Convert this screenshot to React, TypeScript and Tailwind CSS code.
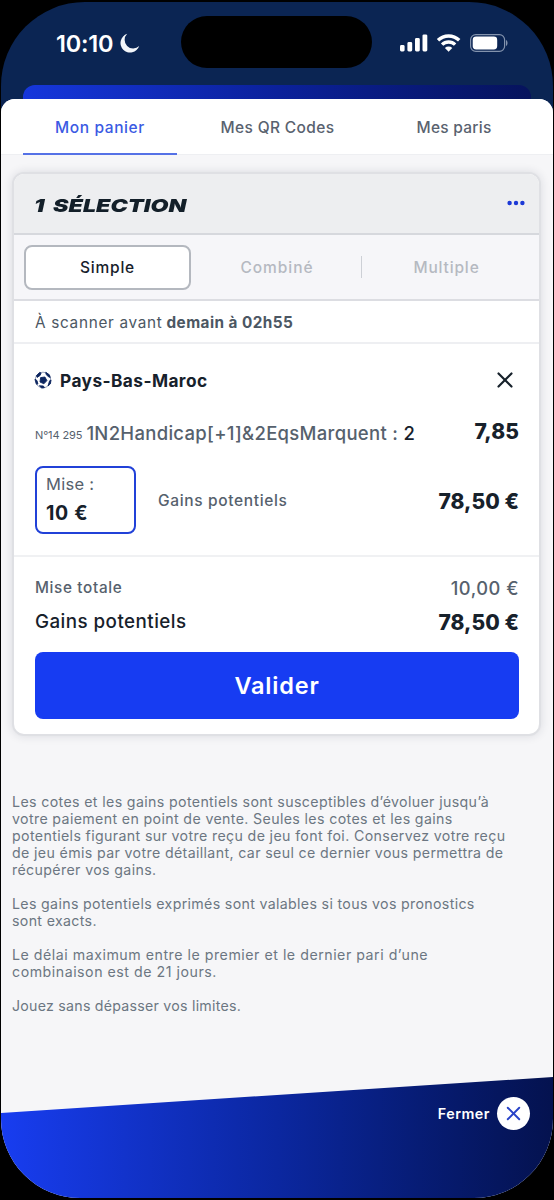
import { X } from 'lucide-react'
import type { ReactNode } from 'react'

const legal = [
  {
    tracking: 'tracking-[0.36px]',
    lines: [
      'Les cotes et les gains potentiels sont susceptibles d’évoluer jusqu’à',
      'votre paiement en point de vente. Seules les cotes et les gains',
      'potentiels figurant sur votre reçu de jeu font foi. Conservez votre reçu',
      'de jeu émis par votre détaillant, car seul ce dernier vous permettra de',
      'récupérer vos gains.',
    ],
  },
  {
    tracking: 'tracking-[0.33px]',
    lines: [
      'Les gains potentiels exprimés sont valables si tous vos pronostics',
      'sont exacts.',
    ],
  },
  {
    tracking: 'tracking-[0.52px]',
    lines: [
      'Le délai maximum entre le premier et le dernier pari d’une',
      'combinaison est de 21 jours.',
    ],
  },
  {
    tracking: 'tracking-[0.24px]',
    lines: ['Jouez sans dépasser vos limites.'],
  },
]

function StatusBar(): ReactNode {
  return (
    <div className="flex h-[83px] shrink-0 items-start pt-[14px]">
      <div className="flex h-[54px] w-[180px] items-center pl-[55px] text-white">
        <span className="w-[64px] pt-px text-[23.5px] font-semibold tracking-[-0.2px]">
          10:10
        </span>
        <svg className="blur-[0.6px]" width="20" height="20" viewBox="0 0 20 20">
          <path d="M7.2 .8A9.6 9.6 0 1 0 19.2 13 8.2 8.2 0 0 1 7.2 .8Z" fill="#f3f6fa" />
        </svg>
      </div>
      <div className="h-[52px] w-[191px] rounded-full bg-black" />
      <div className="flex h-[54px] items-center pl-[28px]">
        <svg width="108" height="18" viewBox="0 0 108 18" fill="#fff">
          <rect x="0" y="11" width="4.6" height="6.5" rx="1.4" />
          <rect x="7.4" y="8" width="4.8" height="9.5" rx="1.4" />
          <rect x="15" y="4" width="4.8" height="13.5" rx="1.4" />
          <rect x="22.5" y="0.4" width="4.8" height="17.1" rx="1.4" />
          <g fill="none" stroke="#fff" strokeWidth="3.4">
            <path d="M38 6.3a15.2 15.2 0 0 1 21.2 0" />
            <path d="M42.1 10.6a9.3 9.3 0 0 1 13 0" />
          </g>
          <path d="M44.9 13.9a5.4 5.4 0 0 1 7.4 0L48.6 17.7Z" />
          <rect
            x="70.6"
            y="0.6"
            width="34"
            height="16.8"
            rx="5.2"
            fill="none"
            stroke="#8393ad"
            strokeWidth="1.2"
          />
          <rect x="72.7" y="2.6" width="24.5" height="12.8" rx="3.4" />
          <path d="M106 6v6c2-1 2-5 0-6Z" fill="#8393ad" />
        </svg>
      </div>
    </div>
  )
}

function Ball(): ReactNode {
  return (
    <svg width="18" height="18" viewBox="0 0 18 18">
      <circle cx="9" cy="9" r="7.8" fill="#fff" stroke="#7d8aa8" strokeWidth=".8" />
      <g fill="#0d2660" stroke="#0d2660" strokeWidth="0.9">
        <path d="M6.6 6.6l4.3-.6 2 3.6-3 3.2-3.9-1.8Z" />
        <path d="M2.4 4.6l3.3-3.2 1.4.6-1 2.4-2.9 2Z" />
        <path d="M11.8 1.3l3.6 2.5.8 2.7-2.4-1.2-1.8-2.2Z" />
        <path d="M1 8.2l2 1.4.9 3.4-1.4.2Z" />
        <path d="M15.6 9.8l1.4-.8-.6 3.8-2.4 2.2Z" />
        <path d="M5.4 14.8l4 .2 1 1.7-2.7.3Z" />
      </g>
    </svg>
  )
}

function Tabs(): ReactNode {
  return (
    <div className="flex h-[56px] w-full border-b border-[#eeeff2] pl-[22px] text-[15.5px] font-medium text-[#59626f]">
      <button className="h-[56px] w-[154px] border-b-2 border-[#5571e6] pt-[3px] text-[#3a5ae3]">
        <span className="tracking-[0.6px]">Mon panier</span>
      </button>
      <button className="w-[201px] pt-[2px] tracking-[0.35px]">Mes QR Codes</button>
      <button className="w-[152px] pt-[2px] tracking-[0.25px]">Mes paris</button>
    </div>
  )
}

function Card(): ReactNode {
  return (
    <section className="ml-[11px] mt-[17px] h-[564px] w-[529px] overflow-hidden rounded-[12px] border-2 border-[#dfe0e4] bg-white shadow-[0_0_10px_rgba(30,40,60,0.13)]">
      <header className="flex h-[61px] items-center justify-between border-b-2 border-[#d6d8dd] bg-[#edeef0] pl-[20px] pr-[14px]">
        <h1 className="origin-left scale-x-[1.29] pt-[4px] text-[18px] font-black italic text-[#131f29] [word-spacing:3px]">
          1 SÉLECTION
        </h1>
        <svg
          className="mb-[2px]"
          width="18"
          height="6"
          viewBox="0 0 18 6"
          fill="#1c39d6"
        >
          <circle cx="2.6" cy="3" r="2.2" />
          <circle cx="9" cy="3" r="2.2" />
          <circle cx="15.4" cy="3" r="2.2" />
        </svg>
      </header>

      <div className="flex h-[66px] items-center border-b-2 border-[#dcdde2] bg-[#f6f6f9] pl-[10px] text-[15.5px] font-medium text-[#b5b9c1]">
        <button className="h-[45px] w-[167px] rounded-[8px] border-2 border-[#b4b8bf] bg-white pt-[2px] tracking-[0.8px] text-[#17212b]">
          Simple
        </button>
        <button className="w-[170px] pl-[2px] pt-px tracking-[0.95px]">
          Combiné
        </button>
        <span className="h-[22px] w-px bg-[#cdd0d6]" />
        <button className="w-[169px] pt-px tracking-[0.85px]">Multiple</button>
      </div>

      <p className="flex h-[43px] items-center gap-1 border-b-2 border-[#eeeff2] pl-[21px] pt-[3px] text-[15.3px] text-[#4c5763]">
        <span className="tracking-[0.7px]">À scanner avant</span>
        <b className="font-bold tracking-[0.45px]">demain à 02h55</b>
      </p>

      <div className="h-[213px] border-b-2 border-[#f0f1f3] pl-[20px] pr-[20px] pt-[22px]">
        <div className="flex h-[28px] items-center">
          <Ball />
          <h2 className="ml-[8px] pt-[2px] text-[17.3px] font-bold tracking-[0.42px] text-[#17212b]">
            Pays-Bas-Maroc
          </h2>
          <X size={26} strokeWidth={2} className="ml-auto mr-[1px] text-[#17212b]" />
        </div>
        <div className="mt-[24px] flex h-[30px] items-center pl-px text-[#56616d]">
          <span className="pt-[5px] text-[11px] tracking-[-0.1px]">N°14 295</span>
          <span className="ml-[4px] pt-[2px] text-[18.5px] font-medium tracking-[0.3px]">
            1N2Handicap[+1]&amp;2EqsMarquent :{' '}
            <span className="text-[#17212b]">2</span>
          </span>
          <b className="mb-[2px] ml-auto text-[21px] font-extrabold tracking-[0.1px] text-[#17212b]">
            7,85
          </b>
        </div>
        <div className="mt-[18px] flex h-[68px] items-center pl-px">
          <div className="h-[68px] w-[101px] rounded-[8px] border-2 border-[#2141d8] pl-[9px] pt-[3px]">
            <p className="text-[16.5px] leading-[26px] tracking-[0.3px] text-[#56616d]">
              Mise :
            </p>
            <p className="text-[19.5px] font-bold leading-[33px] tracking-[0.7px] text-[#17212b]">
              10 €
            </p>
          </div>
          <span className="ml-[22px] pt-[2px] text-[15.5px] font-medium tracking-[0.65px] text-[#56616d]">
            Gains potentiels
          </span>
          <b className="ml-auto pt-[4px] text-[21px] font-extrabold tracking-[0.05px] text-[#17212b]">
            78,50 €
          </b>
        </div>
      </div>

      <div className="pl-[21px] pr-[20px] pt-[14px]">
        <div className="flex h-[34px] items-center justify-between font-medium text-[#56616d]">
          <span className="text-[15.3px] tracking-[0.65px]">Mise totale</span>
          <span className="pt-px text-[18.3px] tracking-[0.5px]">10,00 €</span>
        </div>
        <div className="flex h-[33px] items-center justify-between text-[#17212b]">
          <span className="pt-[2px] text-[18.8px] font-medium tracking-[0.45px]">
            Gains potentiels
          </span>
          <b className="pt-[2px] text-[21px] font-extrabold tracking-[0.05px]">
            78,50 €
          </b>
        </div>
        <button className="mt-[14px] h-[67px] w-full rounded-[8px] bg-[#173cf2] text-[23.5px] font-semibold tracking-[0.8px] text-white">
          Valider
        </button>
      </div>
    </section>
  )
}

export default function App(): ReactNode {
  return (
    <div className="h-[1200px] w-[554px] overflow-hidden bg-black pl-px pt-[2px] font-['Inter',sans-serif]">
      <div className="flex h-[1196px] w-[552px] flex-col overflow-hidden rounded-t-[84px] rounded-b-[79px] bg-[#0b2553]">
        <StatusBar />
        <div className="ml-[22px] h-[14px] w-[508px] shrink-0 rounded-t-[12px] bg-linear-to-r from-[#1637dc] via-[#0b219b] to-[#06135c]" />
        <main className="relative flex-1 rounded-t-[14px] bg-[#f6f6f8]">
          <div className="overflow-hidden rounded-t-[14px] bg-white">
            <Tabs />
          </div>
          <Card />
          <div className="ml-[11px] mt-[56.6px] space-y-[17px] text-[14.2px] leading-[17.1px] text-[#6c7682]">
            {legal.map(({ tracking, lines }) => (
              <p key={lines[0]} className={tracking}>
                {lines.map((line) => (
                  <span key={line} className="block whitespace-nowrap">
                    {line}
                  </span>
                ))}
              </p>
            ))}
          </div>
          <footer className="absolute inset-x-0 bottom-0 flex h-[121px] items-start justify-end bg-linear-to-r from-[#183df0] via-[#0b27a0] to-[#04124f] pr-[23px] pt-[20px] [clip-path:polygon(0_36px,100%_0,100%_100%,0_100%)]">
            <button className="flex items-center gap-[7px] text-[14.3px] font-semibold tracking-[0.5px] text-white">
              Fermer
              <span className="flex size-[33px] items-center justify-center rounded-full bg-white">
                <X size={23} strokeWidth={2} className="text-[#2843c8]" />
              </span>
            </button>
          </footer>
        </main>
      </div>
    </div>
  )
}
